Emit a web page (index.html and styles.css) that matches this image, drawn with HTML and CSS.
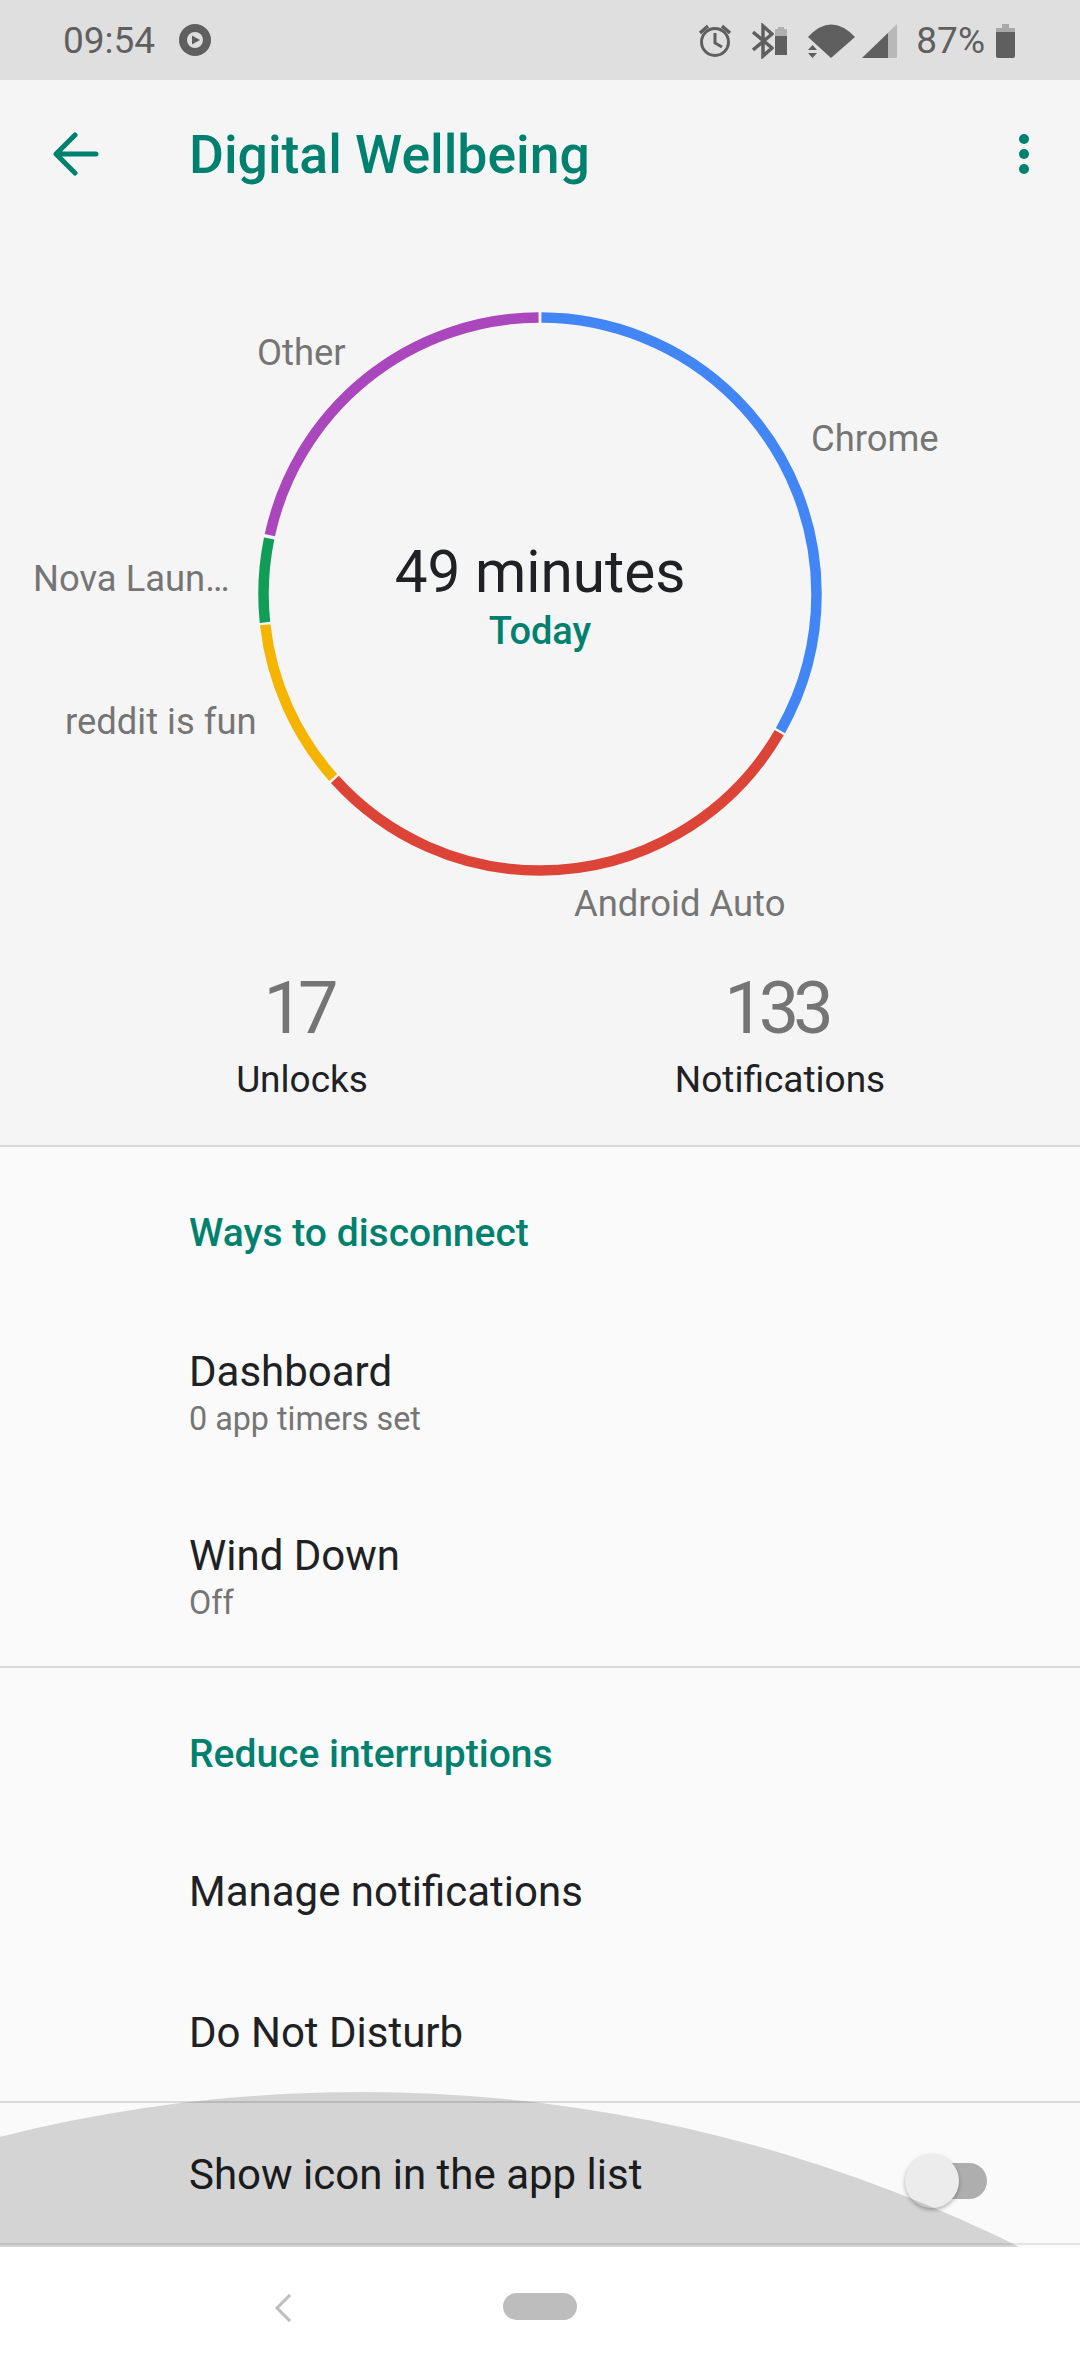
FILE: index.html
```html
<!DOCTYPE html>
<html lang="en">

<head>
    <meta charset="UTF-8">
    <meta name="viewport" content="width=device-width, initial-scale=1.0">
    <title>Digital Wellbeing</title>
    <link rel="stylesheet" href="styles.css">
</head>

<body>
    <div class="status-bar">
        <span class="clock">09:54</span>
        <svg class="play-icon" width="32" height="34" viewBox="0 0 32 34">
            <circle cx="16" cy="17" r="16" fill="#5f5f5f" />
            <circle cx="16" cy="17" r="8" fill="#dfdfdf" />
            <path d="M13 12.5 L21 17 L13 21.5 Z" fill="#5f5f5f" />
        </svg>
        <div class="status-right">
            <svg width="34" height="36" viewBox="697 23 34 36" fill="none" stroke="#5f5f5f">
                <circle cx="714" cy="42" r="13.5" stroke-width="3" />
                <path d="M714 33 V43 L721 47" stroke-width="3" />
                <path d="M699 33 L707 26 M729 33 L721 26" stroke-width="3.5" />
            </svg>
            <svg class="bt-icon" width="22" height="36" viewBox="751 23 22 36" fill="none" stroke="#5f5f5f">
                <path d="M752 32 L771 48 L762 56 V26 L771 34 L752 50" stroke-width="3.5" />
            </svg>
            <svg class="small-battery" width="13" height="30" viewBox="774 26 13 30">
                <path d="M777 27 H783 V29 H786 V36 H774 V29 H777 Z" fill="#b0b0b0" />
                <rect x="774" y="36" width="12" height="19" fill="#5f5f5f" />
            </svg>
            <svg class="wifi-icon" width="48" height="36" viewBox="807 22 48 36">
                <path d="M807 36 Q830 11 854 36 L830 57 Z" fill="#5f5f5f" />
                <path d="M811.500 44 L816 49 H807 Z M807 52 H816 L811.500 57 Z" fill="#5f5f5f" />
            </svg>
            <svg class="signal-icon" width="36" height="36" viewBox="861 22 36 36">
                <path d="M861 57 L896 23 V57 Z" fill="#b8b8b8" />
                <path d="M861 57 L887 32 V57 Z" fill="#5f5f5f" />
            </svg>
            <span class="battery-text">87%</span>
            <svg class="battery-icon" width="20" height="36" viewBox="996 22 20 36">
                <path d="M1002 23 H1009 V27 H1015 V31 H996 V27 H1002 Z" fill="#a8a8a8" />
                <path d="M996 31 H1015 V55 Q1015 57 1013 57 H998 Q996 57 996 55 Z" fill="#5f5f5f" />
            </svg>
        </div>
    </div>

    <div class="app-bar">
        <svg class="back-arrow" width="46" height="44" viewBox="0 0 46 44" fill="none" stroke="#00816f" stroke-width="5" stroke-linecap="round" stroke-linejoin="round">
            <path d="M43 22 H4 M22 3 L3 22 L22 41" />
        </svg>
        <h1 class="title">Digital Wellbeing</h1>
        <div class="more-dots"><span></span><span></span><span></span></div>
    </div>

    <div class="chart-section">
        <div class="donut">
            <svg width="564" height="564" viewBox="0 0 564 564" fill="none" stroke-width="10.500">
                <g transform="rotate(-90 282 282)">
                    <circle cx="282" cy="282" r="276.500" pathLength="360" stroke="#4285f4" stroke-dasharray="119.300 240.700" stroke-dashoffset="-0.300" />
                    <circle cx="282" cy="282" r="276.500" pathLength="360" stroke="#db4437" stroke-dasharray="107.800 252.200" stroke-dashoffset="-120.100" />
                    <circle cx="282" cy="282" r="276.500" pathLength="360" stroke="#f4b400" stroke-dasharray="35.200 324.800" stroke-dashoffset="-228.400" />
                    <circle cx="282" cy="282" r="276.500" pathLength="360" stroke="#0f9d58" stroke-dasharray="17.500 342.500" stroke-dashoffset="-264.100" />
                    <circle cx="282" cy="282" r="276.500" pathLength="360" stroke="#ab47bc" stroke-dasharray="77.400 282.600" stroke-dashoffset="-282.300" />
                </g>
            </svg>
            <div class="donut-center">
                <div class="total">49 minutes</div>
                <div class="period">Today</div>
            </div>
        </div>
        <span class="slice-label label-other">Other</span>
        <span class="slice-label label-chrome">Chrome</span>
        <span class="slice-label label-nova">Nova Laun…</span>
        <span class="slice-label label-reddit">reddit is fun</span>
        <span class="slice-label label-auto">Android Auto</span>
    </div>

    <div class="stats">
        <div class="stat">
            <div class="stat-value">17</div>
            <div class="stat-name">Unlocks</div>
        </div>
        <div class="stat">
            <div class="stat-value">133</div>
            <div class="stat-name">Notifications</div>
        </div>
    </div>

    <div class="list">
        <div class="group">
            <div class="group-title">Ways to disconnect</div>
            <div class="row">
                <div class="row-title">Dashboard</div>
                <div class="row-sub">0 app timers set</div>
            </div>
            <div class="row">
                <div class="row-title">Wind Down</div>
                <div class="row-sub">Off</div>
            </div>
        </div>
        <div class="group">
            <div class="group-title">Reduce interruptions</div>
            <div class="row row-single">
                <div class="row-title">Manage notifications</div>
            </div>
            <div class="row row-single">
                <div class="row-title">Do Not Disturb</div>
            </div>
        </div>
        <div class="row row-switch">
            <div class="row-title">Show icon in the app list</div>
            <div class="switch"><span class="switch-thumb"></span></div>
        </div>
        <div class="ripple"></div>
    </div>

    <div class="nav-bar">
        <svg class="nav-back" width="20" height="28" viewBox="0 0 20 28" fill="none" stroke="#bdbdbd" stroke-width="3">
            <path d="M17 1 L4 14 L17 27" />
        </svg>
        <div class="nav-pill"></div>
    </div>
</body>

</html>
```

FILE: styles.css
```css
* {
    box-sizing: border-box;
}

html,
body {
    margin: 0;
    height: 2370px;
    overflow: hidden;
}

body {
    font-family: Roboto, 'Noto Sans', sans-serif;
    background-color: #f5f5f5;
    color: #202124;
}

.status-bar {
    height: 80px;
    background-color: #dfdfdf;
    color: #5f5f5f;
    display: flex;
    align-items: center;
    padding: 0 64px 0 63px;
    font-size: 37px;
}

.play-icon {
    margin-left: 24px;
}

.status-right {
    margin-left: auto;
    display: flex;
    align-items: center;
    padding-top: 1px;
}

.bt-icon {
    margin-left: 20px;
}

.small-battery {
    margin-left: 1px;
}

.wifi-icon {
    margin-left: 20px;
}

.signal-icon {
    margin-left: 6px;
}

.battery-text {
    margin-left: 18px;
}

.battery-icon {
    margin-left: 11px;
}

.app-bar {
    height: 146px;
    display: flex;
    align-items: center;
    padding: 2px 51px 0 53px;
}

.title {
    margin: 0 0 0 90px;
    font-size: 53.500px;
    font-weight: 500;
    color: #00816f;
}

.more-dots {
    margin-left: auto;
    display: flex;
    flex-direction: column;
    gap: 5px;
}

.more-dots span {
    width: 10px;
    height: 10px;
    border-radius: 50%;
    background-color: #00816f;
}

.chart-section {
    position: relative;
    padding-top: 86px;
    display: flex;
    justify-content: center;
}

.donut {
    position: relative;
    width: 564px;
    height: 564px;
}

.donut svg {
    display: block;
}

.donut-center {
    position: absolute;
    left: 0;
    right: 0;
    top: 227px;
    text-align: center;
}

.total {
    font-size: 58.500px;
    line-height: 66px;
}

.period {
    font-size: 38px;
    font-weight: 500;
    line-height: 44px;
    color: #00816f;
    margin-top: 4px;
}

.slice-label {
    position: absolute;
    font-size: 36.400px;
    line-height: 44px;
    color: #757575;
    white-space: nowrap;
}

.label-other {
    left: 257px;
    top: 105px;
}

.label-chrome {
    left: 811px;
    top: 191px;
}

.label-nova {
    left: 33px;
    top: 331px;
}

.label-reddit {
    left: 65px;
    top: 474px;
}

.label-auto {
    left: 574px;
    top: 656px;
}

.stats {
    display: grid;
    grid-template-columns: 1fr 1fr;
    padding: 91px 61px 44px 63px;
    text-align: center;
}

.stat-value {
    font-size: 72px;
    line-height: 84px;
    font-weight: 400;
    letter-spacing: -6px;
    padding-right: 8px;
    color: #757575;
}

.stat-name {
    font-size: 37px;
    line-height: 42px;
    margin-top: 8px;
}

.list {
    position: relative;
    overflow: hidden;
    height: 1102px;
    background-color: #fafafa;
    border-top: 2px solid #dadada;
}

.group {
    border-bottom: 2px solid #dadada;
}

.group-title {
    padding: 61px 0 40px 189px;
    font-size: 39px;
    line-height: 50px;
    font-weight: 500;
    color: #00816f;
}

.row {
    padding: 49px 0 41px 189px;
}

.row-single {
    padding: 48px 0 43px 189px;
}

.row-title {
    font-size: 42px;
    line-height: 50px;
}

.row-sub {
    font-size: 32.300px;
    line-height: 44px;
    color: #757575;
}

.row-switch {
    height: 142px;
    padding: 47px 93px 0 189px;
    display: flex;
    justify-content: space-between;
    border-bottom: 2px solid #e4e4e4;
}

.switch {
    position: relative;
    width: 81px;
    height: 36px;
    margin-top: 13px;
    border-radius: 18px;
    background-color: #aeaeae;
}

.switch-thumb {
    position: absolute;
    left: -1px;
    top: -9px;
    width: 54px;
    height: 54px;
    border-radius: 50%;
    background-color: #ececec;
    box-shadow: 0 2px 4px rgba(0, 0, 0, 0.3);
}

.ripple {
    position: absolute;
    left: -1114px;
    top: 945px;
    width: 2950px;
    height: 2950px;
    border-radius: 50%;
    background-color: rgba(0, 0, 0, 0.15);
}

.nav-bar {
    position: relative;
    height: 123px;
    padding-bottom: 4px;
    background-color: #fff;
    display: flex;
    align-items: center;
    justify-content: center;
}

.nav-back {
    position: absolute;
    left: 273px;
    top: 47px;
}

.nav-pill {
    width: 74px;
    height: 27px;
    border-radius: 14px;
    background-color: #bdbdbd;
}
```
